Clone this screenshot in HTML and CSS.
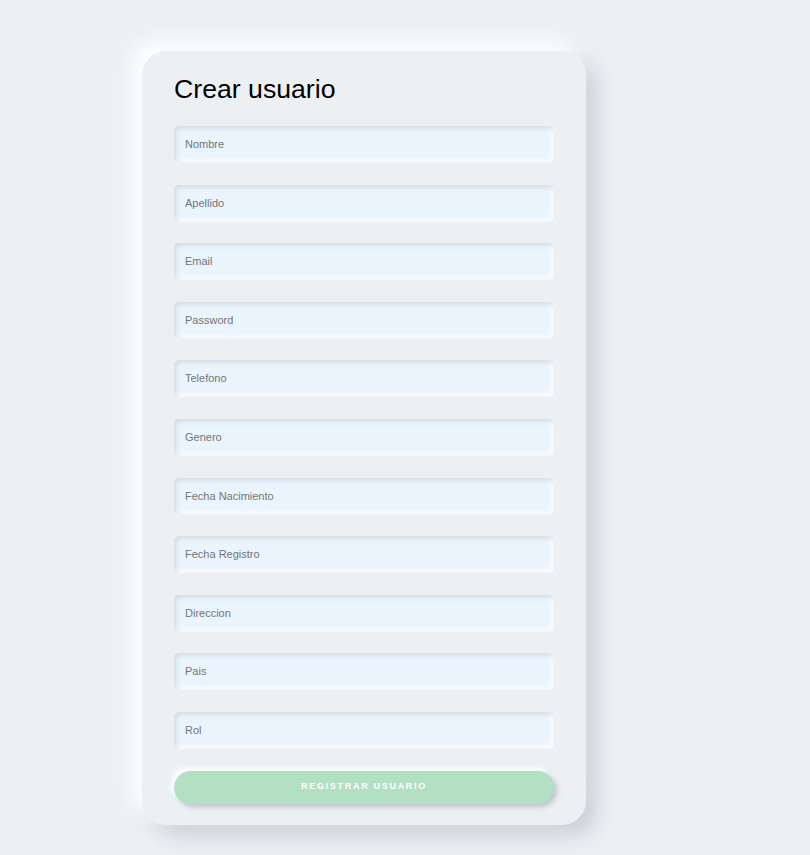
FILE: index.html
```html
<!DOCTYPE html>
<html lang="es">
<head>
<meta charset="utf-8">
<title>Crear usuario</title>
<link rel="stylesheet" href="styles.css">
</head>
<body>
<main class="page">
  <form class="card">
    <h1 class="title">Crear usuario</h1>
    <div class="fields">
      <input class="field" type="text" placeholder="Nombre">
      <input class="field" type="text" placeholder="Apellido">
      <input class="field" type="text" placeholder="Email">
      <input class="field" type="text" placeholder="Password">
      <input class="field" type="text" placeholder="Telefono">
      <input class="field" type="text" placeholder="Genero">
      <input class="field" type="text" placeholder="Fecha Nacimiento">
      <input class="field" type="text" placeholder="Fecha Registro">
      <input class="field" type="text" placeholder="Direccion">
      <input class="field" type="text" placeholder="Pais">
      <input class="field" type="text" placeholder="Rol">
    </div>
    <button class="submit" type="button">Registrar usuario</button>
  </form>
</main>
</body>
</html>
```
FILE: styles.css
```css
html, body {
  margin: 0;
  background: #ecf0f3;
  font-family: "Liberation Sans", Arial, sans-serif;
}
.page {
  padding: 51px 0 30px 142px;
}
.card {
  box-sizing: border-box;
  width: 444px;
  height: 774px;
  padding: 23px 32px 21px;
  background: #ecf0f3;
  border-radius: 24px;
  box-shadow: -10px -10px 20px #ffffff, 10px 10px 20px rgba(160, 165, 175, 0.45);
  display: flex;
  flex-direction: column;
}
.title {
  margin: 0 0 22px;
  font-size: 26.67px;
  line-height: 30px;
  font-weight: 400;
  color: #000;
}
.fields {
  display: flex;
  flex-direction: column;
  gap: 21.6px;
}
.field {
  box-sizing: border-box;
  height: 37px;
  width: 100%;
  border: none;
  border-radius: 5px;
  padding: 0 11px 1px;
  background: #eaf4fd;
  font-family: "Liberation Sans", Arial, sans-serif;
  font-size: 11px;
  color: #333;
  box-shadow: inset 2px 2px 5px rgba(195, 200, 208, 0.6), inset -3px -3px 5px rgba(255, 255, 255, 0.9);
  outline: none;
}
.field::placeholder {
  color: #757575;
}
.submit {
  margin-top: 22px;
  height: 33px;
  width: 100%;
  border: none;
  border-radius: 17px;
  background: #b3e0c2;
  color: #ffffff;
  font-family: "Liberation Sans", Arial, sans-serif;
  font-size: 9px;
  font-weight: 700;
  letter-spacing: 1.7px;
  text-transform: uppercase;
  padding: 0 0 2px;
  box-shadow: 3px 3px 5px rgba(160, 165, 175, 0.6), -3px -3px 5px #ffffff;
}
```
